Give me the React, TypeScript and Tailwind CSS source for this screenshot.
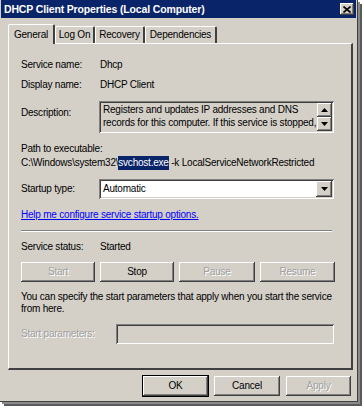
const font = { fontFamily: '"Liberation Sans", Arial, sans-serif' };

const raised =
  'shadow-[inset_-1px_-1px_0_#404040,inset_1px_1px_0_#ffffff,inset_-2px_-2px_0_#808080,inset_2px_2px_0_#d4d0c8]';
const sunken =
  'shadow-[inset_1px_1px_0_#808080,inset_-1px_-1px_0_#ffffff,inset_2px_2px_0_#404040,inset_-2px_-2px_0_#d4d0c8]';

function Btn({ label, disabled, w, def }: { label: string; disabled?: boolean; w: string; def?: boolean }) {
  return (
    <div
      className={`${w} h-[20px] flex items-center justify-center bg-[#d4d0c8] ${raised} ${
        def ? 'outline outline-1 outline-black' : ''
      } ${disabled ? 'text-[#a0a0a0] [text-shadow:1px_1px_0_#ffffff]' : 'text-black'}`}
    >
      {label}
    </div>
  );
}

function ArrowBox({ dir }: { dir: 'up' | 'down' }) {
  return (
    <div className={`w-[15px] h-[14px] bg-[#d4d0c8] ${raised} flex items-center justify-center`}>
      <svg width="7" height="4" viewBox="0 0 7 4">
        {dir === 'up' ? <polygon points="0,4 7,4 3.5,0" fill="#000" /> : <polygon points="0,0 7,0 3.5,4" fill="#000" />}
      </svg>
    </div>
  );
}

const tabCls =
  'h-[17px] bg-[#d4d0c8] border-l border-t border-white border-r-2 border-r-[#404040] rounded-t-[2px] flex items-center justify-center';

export default function App() {
  return (
    <div
      className="w-[364px] h-[408px] bg-white text-[10px] leading-[14px] tracking-[-0.22px] text-black whitespace-nowrap"
      style={font}
    >
      <div className="w-[358px] h-[402px] bg-[#d4d0c8] shadow-[2px_2px_0_#8a8a8a,4px_4px_0_#5a5a5a] border-r border-b border-[#404040] flex flex-col">
        {/* Title bar */}
        <div className="h-[18px] mx-[1px] bg-[#0a246a] flex items-center justify-between pl-[3px] pr-[2px]">
          <span className="text-white font-bold text-[10.5px] tracking-[-0.15px]">DHCP Client Properties (Local Computer)</span>
          <div className={`w-[14px] h-[12px] bg-[#d4d0c8] ${raised} flex items-center justify-center`}>
            <svg width="8" height="7" viewBox="0 0 8 7">
              <path d="M0.5 0.5 L7.5 6.5 M7.5 0.5 L0.5 6.5" stroke="#000" strokeWidth="1.6" />
            </svg>
          </div>
        </div>

        {/* Tabs */}
        <div className="mt-[6px] ml-[8px] flex items-end h-[19px]">
          <div className="relative z-10 h-[20px] w-[47px] -mb-[1px] bg-[#d4d0c8] border-l border-t border-white border-r-2 border-r-[#404040] rounded-t-[2px] flex items-center justify-center">
            General
          </div>
          <div className={`${tabCls} w-[40px]`}>Log On</div>
          <div className={`${tabCls} w-[50px]`}>Recovery</div>
          <div className={`${tabCls} w-[72px]`}>Dependencies</div>
        </div>

        {/* Panel */}
        <div className="ml-[8px] w-[345px] h-[327px] border-l border-t border-white border-r-2 border-b-2 border-r-[#404040] border-b-[#404040] px-[12px] flex flex-col">
          <div className="mt-[14px] flex h-[14px] items-center">
            <span className="w-[79px]">Service name:</span>
            <span>Dhcp</span>
          </div>
          <div className="mt-[6px] flex h-[14px] items-center">
            <span className="w-[79px]">Display name:</span>
            <span>DHCP Client</span>
          </div>
          <div className="mt-[9px] flex">
            <span className="w-[78px] mt-[5px]">Description:</span>
            <div className={`w-[235px] h-[32px] bg-[#d4d0c8] ${sunken} flex justify-between pl-[4px] pr-[2px] py-[2px]`}>
              <div className="leading-[13px]">
                Registers and updates IP addresses and DNS
                <br />
                records for this computer. If this service is stopped,
              </div>
              <div className="flex flex-col">
                <ArrowBox dir="up" />
                <ArrowBox dir="down" />
              </div>
            </div>
          </div>
          <div className="mt-[9px] h-[14px] flex items-center">Path to executable:</div>
          <div className="h-[14px] flex items-center">
            C:\Windows\system32\<span className="bg-[#0a246a] text-white">svchost.exe</span>&nbsp;-k LocalServiceNetworkRestricted
          </div>
          <div className="mt-[9px] flex items-center">
            <span className="w-[78px]">Startup type:</span>
            <div className={`w-[235px] h-[20px] bg-white ${sunken} flex items-center justify-between pl-[4px] pr-[2px]`}>
              <span>Automatic</span>
              <div className={`w-[16px] h-[16px] bg-[#d4d0c8] ${raised} flex items-center justify-center`}>
                <svg width="7" height="4" viewBox="0 0 7 4">
                  <polygon points="0,0 7,0 3.5,4" fill="#000" />
                </svg>
              </div>
            </div>
          </div>
          <div className="mt-[9px] h-[14px] flex items-center">
            <span className="text-[#0000ff] underline">Help me configure service startup options.</span>
          </div>
          <div className="mt-[8px] w-[311px] border-t border-[#808080] border-b border-b-white" />
          <div className="mt-[8px] flex h-[14px] items-center">
            <span className="w-[79px]">Service status:</span>
            <span>Started</span>
          </div>
          <div className="mt-[8px] flex gap-[5px]">
            <Btn label="Start" disabled w="w-[74px]" />
            <Btn label="Stop" w="w-[74px]" />
            <Btn label="Pause" disabled w="w-[76px]" />
            <Btn label="Resume" disabled w="w-[75px]" />
          </div>
          <div className="mt-[9px] leading-[12px]">
            You can specify the start parameters that apply when you start the service
            <br />
            from here.
          </div>
          <div className="mt-[9px] flex items-center">
            <span className="w-[95px] text-[#a0a0a0] [text-shadow:1px_1px_0_#ffffff]">Start parameters:</span>
            <div className={`w-[218px] h-[20px] bg-[#d4d0c8] ${sunken}`} />
          </div>
        </div>

        {/* Bottom buttons */}
        <div className="mt-[6px] flex justify-end gap-[6px] pr-[6px]">
          <Btn label="OK" def w="w-[65px]" />
          <Btn label="Cancel" w="w-[66px]" />
          <Btn label="Apply" disabled w="w-[65px]" />
        </div>
      </div>
    </div>
  );
}
